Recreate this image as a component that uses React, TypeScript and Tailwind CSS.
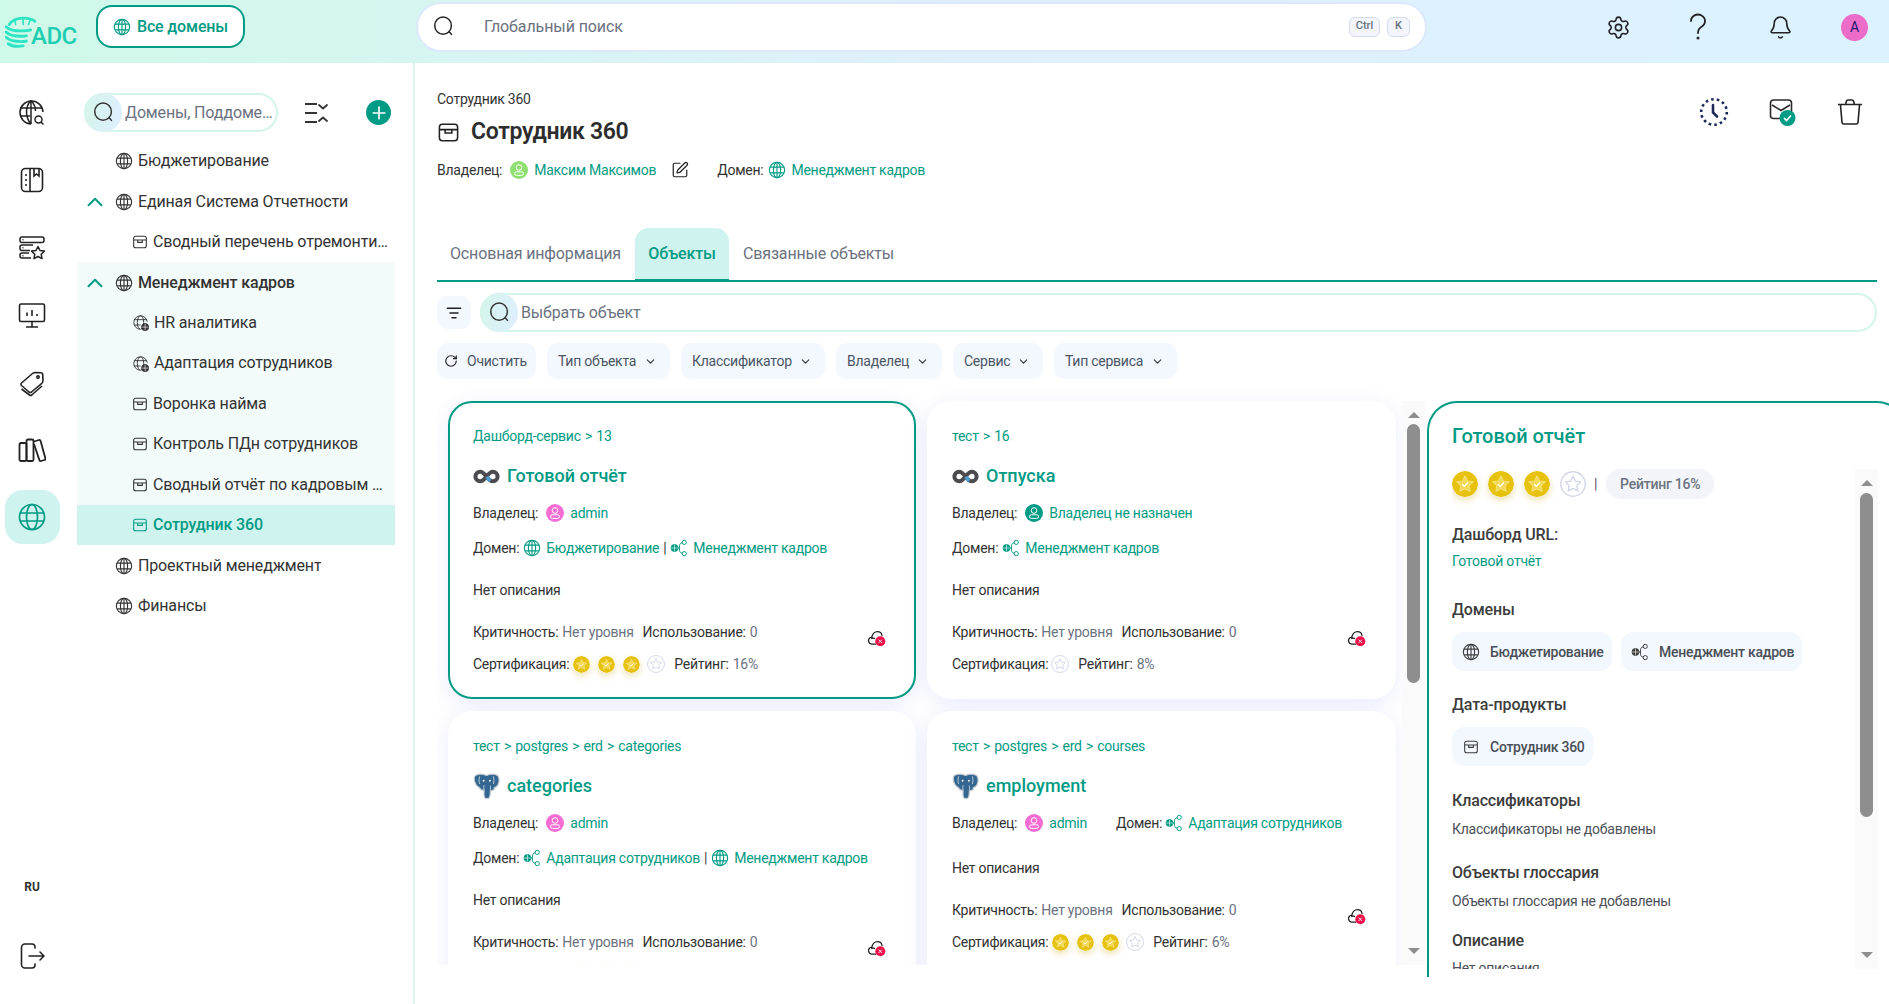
import React from "react";
import { Bell, ChevronDown, ChevronUp, ListFilter, Plus, RotateCw, Settings, SquarePen } from "lucide-react";

type IP = { className?: string };

const Globe = ({ className = "" }: IP) => (
  <svg viewBox="0 0 24 24" fill="none" stroke="currentColor" strokeWidth="1.5" className={className}>
    <circle cx="12" cy="12" r="10.2" />
    <ellipse cx="12" cy="12" rx="4.8" ry="10.2" />
    <path d="M12 1.8v20.4M2.8 8.2h18.4M2.8 15.8h18.4" />
  </svg>
);

const SubGlobe = ({ className = "" }: IP) => (
  <svg viewBox="0 0 24 24" fill="none" stroke="currentColor" strokeWidth="1.3" className={className}>
    <path d="M21.5 11A9.5 9.5 0 1 0 11 21.5" />
    <ellipse cx="12" cy="12" rx="4.5" ry="9.5" />
    <path d="M3 8h18M3 15.5h9" />
    <circle cx="18.5" cy="18.5" r="5" fill="currentColor" />
    <path d="M14 18.5h9M18.5 14v9" stroke="#fff" strokeWidth="0.9" />
  </svg>
);

const Box = ({ className = "" }: IP) => (
  <svg viewBox="0 0 24 24" fill="none" stroke="currentColor" strokeWidth="1.6" className={className}>
    <rect x="2.5" y="3.5" width="19" height="17" rx="3" />
    <path d="M2.5 9h19M8.5 9v3.6h7V9" />
  </svg>
);

const Nodes = ({ className = "" }: IP) => (
  <svg viewBox="0 0 24 24" fill="none" stroke="currentColor" strokeWidth="1.3" className={className}>
    <circle cx="6" cy="12" r="4.6" fill="currentColor" />
    <path d="M1.5 12h9M6 7.5v9" stroke="#fff" strokeWidth="0.8" />
    <circle cx="19" cy="4.5" r="2.8" />
    <circle cx="19" cy="19.5" r="2.8" />
    <path d="M16.3 5c-2.5.4-3.3 2-3.6 3.6-.3 2-.3 4.8 0 6.8.3 1.6 1.1 3.2 3.6 3.6M10.5 12h2.2" />
  </svg>
);

const SearchIcon = ({ className = "" }: IP) => (
  <svg viewBox="0 0 24 24" fill="none" stroke="currentColor" strokeWidth="1.7" className={className}>
    <ellipse cx="11.5" cy="11" rx="9.5" ry="9.8" />
    <path d="M18.5 18l2.6 3" strokeLinecap="round" />
  </svg>
);

const Infinity2 = () => (
  <svg viewBox="0 0 28 15" fill="none" strokeWidth="4.2" className="w-[27px] h-[15px] shrink-0">
    <path stroke="#4b4b4f" d="M14 7.500C11 3.500 9.500 2.500 7.500 2.500a5 5 0 0 0 0 10c2 0 3.500-1 6.500-5s4.500-5 6.500-5a5 5 0 0 1 0 10c-2 0-3.500-1-6.500-5" />
    <path stroke="#4f9bd0" d="M14.300 7.900c1.600 2.100 2.700 3.300 3.800 4" />
  </svg>
);

const Elephant = () => (
  <svg viewBox="0 0 28 28" className="w-[27px] h-[27px] shrink-0">
    <path
      d="M2.500 2.500C6 .8 10 .8 14 2.500 18 .8 22 .8 25.500 2.500 27.500 5 27.300 9 26 12c-1 2-2.500 3-4 3v2c-2 1-3 1.500-4 1.500 0 2.500 0 5-1 7-1 1.500-4 1.500-5 0-1-2-.5-5-.5-7.500-2.500 0-4-1-5-3C4.500 14 2.500 12 1.800 9 1 6.500 1.200 4 2.500 2.500z"
      fill="#336791"
      stroke="#c4cad0"
      strokeWidth="1.200"
    />
    <path d="M7 3.500c-1 2.500-1 5.500 0 8M21 3.500c1 2.500 1 5.500 0 8M11.500 17.500c-.5-2-.5-3.500 0-5M18 17.500c.3-1.500.3-3 0-4.500" fill="none" stroke="#dfe6ec" strokeWidth="0.800" />
    <circle cx="11" cy="8" r="1" fill="#fff" />
    <circle cx="17.500" cy="8" r="1" fill="#fff" />
  </svg>
);

const CloudX = () => (
  <svg viewBox="0 0 20 20" fill="none" className="w-[19px] h-[19px] shrink-0">
    <path d="M5.500 17a3.700 3.700 0 0 1-.4-7.400C5.600 6.500 8 3.800 11 3.800c2.700 0 4.400 1.800 4.800 4M8 11a3.500 3.500 0 0 0-3 0M9 17H5.500" stroke="#222" strokeWidth="1.400" strokeLinecap="round" />
    <circle cx="14" cy="14" r="5.300" fill="#f0114a" />
    <path d="M12.300 12.300l3.400 3.400M15.700 12.300l-3.400 3.400" stroke="#fff" strokeWidth="1" />
  </svg>
);

const Star = ({ on, className = "" }: IP & { on: boolean }) =>
  on ? (
    <svg viewBox="0 0 24 24" className={`${className} rounded-full shadow-[0_3px_7px_rgba(200,170,20,0.35)]`}>
      <circle cx="12" cy="12" r="12" fill="#e6c20c" />
      <path d="M12 4.500l2.300 4.700 5.200.8-3.700 3.600.9 5.100-4.700-2.400-4.700 2.400.9-5.100L4.500 10l5.200-.8z" fill="#f3d95a" stroke="#f5e078" strokeWidth="1" strokeLinejoin="round" />
      <path d="M9.300 12.300l2 1.900 3.500-3.600" fill="none" stroke="#fff" strokeWidth="1.200" />
    </svg>
  ) : (
    <svg viewBox="0 0 24 24" fill="none" stroke="#cfd3e6" strokeWidth="1.200" className={className}>
      <circle cx="12" cy="12" r="11.300" />
      <path d="M12 4.800l2.200 4.500 5 .7-3.600 3.500.8 4.900-4.400-2.300-4.400 2.300.8-4.900L4.800 10l5-.7z" strokeLinejoin="round" />
    </svg>
  );

const Avatar = ({ color }: { color: string }) => (
  <span className={`w-[18px] h-[18px] rounded-full flex items-center justify-center shrink-0 ${color}`}>
    <svg viewBox="0 0 18 18" fill="none" stroke="#fff" strokeWidth="1" className="w-[18px] h-[18px]">
      <circle cx="9" cy="6.500" r="2.800" />
      <rect x="4.500" y="10.800" width="9" height="3.600" rx="1.800" />
    </svg>
  </span>
);

const Scrollbar = ({ topGap, thumb, className = "" }: { topGap: string; thumb: string; className?: string }) => (
  <div className={`w-[23px] shrink-0 bg-[#fafafa] flex flex-col items-center ${className}`}>
    <span className="w-0 h-0 border-x-[6px] border-x-transparent border-b-[6px] border-b-[#8e8e8e] mt-[11px]" />
    <span className={`w-[13px] rounded-full bg-[#8e8e8e] ${topGap} ${thumb}`} />
    <span className="w-0 h-0 border-x-[6px] border-x-transparent border-t-[6px] border-t-[#8e8e8e] mt-auto mb-[11px]" />
  </div>
);

const teal = "text-[#009b84]";
const small = "text-sm tracking-[-0.25px]";
const big = "text-base tracking-[-0.15px]";

const GlobeLink = ({ name }: { name: string }) => (
  <span className={`flex items-center gap-[5px] ${teal}`}>
    <Globe className="w-[18px] h-[18px]" />
    {name}
  </span>
);
const NodesLink = ({ name }: { name: string }) => (
  <span className={`flex items-center gap-[5px] ${teal}`}>
    <Nodes className="w-[18px] h-[18px]" />
    {name}
  </span>
);

const Owner = ({ name, color }: { name: string; color: string }) => (
  <span className="flex items-center">
    <span>Владелец:</span>
    <span className="ml-2">
      <Avatar color={color} />
    </span>
    <span className={`ml-[6px] ${teal}`}>{name}</span>
  </span>
);

const Crumbs = ({ parts }: { parts: string[] }) => (
  <div className={`h-5 flex items-center ${small} ${teal} whitespace-pre [word-spacing:1px]`}>{parts.join(" > ")}</div>
);

type CardProps = {
  crumbs: string[];
  title: string;
  icon: React.ReactNode;
  owner: React.ReactNode;
  domain?: React.ReactNode;
  stars: boolean[];
  rating: string;
  selected?: boolean;
  height: string;
};

const Card = ({ crumbs, title, icon, owner, domain, stars, rating, selected, height }: CardProps) => (
  <div
    className={`rounded-[24px] bg-white border-2 pl-[23px] pr-[28px] pt-[23px] shadow-[0_5px_22px_rgba(70,85,235,0.11)] ${height} ${
      selected ? "border-[#009b84]" : "border-white"
    }`}
  >
    <Crumbs parts={crumbs} />
    <div className="h-8 mt-[14px] flex items-center gap-[7px]">
      {icon}
      <span className={`text-lg font-medium ${teal}`}>{title}</span>
    </div>
    <div className={`h-5 mt-[11px] flex items-center ${small} text-[#333]`}>{owner}</div>
    {domain && <div className={`h-5 mt-[15px] flex items-center gap-[4px] ${small} text-[#333] whitespace-nowrap`}>{domain}</div>}
    <div className={`h-5 flex items-center ${small} text-[#333] ${domain ? "mt-[22px]" : "mt-[25px]"}`}>Нет описания</div>
    <div className="mt-[22px] flex justify-between">
      <div className={`${small} text-[#333]`}>
        <div className="h-5 flex items-center">
          Критичность:<span className="ml-1 text-[#6b7280]">Нет уровня</span>
          <span className="ml-[9px]">Использование:</span>
          <span className="ml-1 text-[#6b7280]">0</span>
        </div>
        <div className="h-5 mt-3 flex items-center">
          Сертификация:
          <span className="flex items-center gap-[8px] ml-[4px]">
            {stars.map((s, i) => (
              <Star key={i} on={s} className={s ? "w-[17px] h-[17px]" : "w-[18px] h-[18px] -ml-[1px]"} />
            ))}
          </span>
          <span className="ml-[9px]">Рейтинг:</span>
          <span className="ml-1 text-[#6b7280]">{rating}</span>
        </div>
      </div>
      <div className="mt-[6px]">
        <CloudX />
      </div>
    </div>
  </div>
);

const Tree = ({
  label,
  icon,
  depth,
  open,
  bold,
  tone,
}: {
  label: string;
  icon: "globe" | "sub" | "box";
  depth: 0 | 1;
  open?: boolean;
  bold?: boolean;
  tone?: "soft" | "active";
}) => {
  const bg = tone === "active" ? "bg-[#cff3ee]" : tone === "soft" ? "bg-[#f2fbf9]" : "";
  const active = tone === "active";
  return (
    <div className={`h-[40.45px] flex items-center ${big} ${bg} ${depth ? "pl-[55px]" : "pl-[10px]"}`}>
      {!depth && (
        <span className="w-[18px] mr-[10px] shrink-0">{open && <ChevronUp className={`w-[26px] h-[26px] -ml-[5px] ${teal}`} strokeWidth={1.800} />}</span>
      )}
      <span className={`shrink-0 ${active ? teal : "text-[#333]"}`}>
        {icon === "globe" && <Globe className="w-[18px] h-[18px]" />}
        {icon === "sub" && <SubGlobe className="w-[17px] h-[17px]" />}
        {icon === "box" && <Box className="w-[16px] h-[16px]" />}
      </span>
      <span
        className={`ml-[5px] truncate ${depth ? "w-[236px]" : ""} ${active ? `font-medium ${teal}` : "text-[#333]"} ${bold ? "font-medium" : ""}`}
      >
        {label}
      </span>
    </div>
  );
};

const railIcon = "w-[28px] h-[28px] text-[#222]";

const Rail = () => (
  <div className="w-[77px] shrink-0 flex flex-col items-center pt-[16px] pb-[32px] pr-[13px]">
    {[
      <svg key="1" viewBox="0 0 28 28" fill="none" stroke="currentColor" strokeWidth="1.500" className={railIcon}>
        <path d="M25 13A11.500 11.500 0 1 0 13 25" />
        <path d="M13 1.500c-3 3-4.500 7-4.500 11.500s1.500 8.500 4.500 12M13 1.500c3 3 4.500 7 4.500 10.500M2 9h22M2 17h10M13 1.500V25" />
        <circle cx="20.500" cy="20.500" r="3.500" />
        <path d="M23 23l2.500 2.500" />
      </svg>,
      <svg key="2" viewBox="0 0 28 28" fill="none" stroke="currentColor" strokeWidth="1.600" className={railIcon}>
        <rect x="3.500" y="2.500" width="21" height="23" rx="4" />
        <path d="M12 2.500v23M7 9h2M7 14h2M7 19h2" />
        <path d="M16 2.500v7.500l2.500-2 2.500 2V2.500" />
      </svg>,
      <svg key="3" viewBox="0 0 28 28" fill="none" stroke="currentColor" strokeWidth="1.500" className={railIcon}>
        <rect x="2" y="3" width="24" height="5.500" rx="2" />
        <path d="M15 11H4a2 2 0 0 0-2 2v1.500a2 2 0 0 0 2 2h8M11 19H4a2 2 0 0 0-2 2v1a2 2 0 0 0 2 2h9" />
        <path d="M4.500 5.700h1M4.500 13.700h1M4.500 21.700h1" />
        <path d="M20 12.500l2 4 4.400.6-3.200 3.100.8 4.400-4-2.100-4 2.100.8-4.400-3.200-3.100 4.400-.6z" strokeLinejoin="round" />
      </svg>,
      <svg key="4" viewBox="0 0 28 28" fill="none" stroke="currentColor" strokeWidth="1.600" className={railIcon}>
        <rect x="1.500" y="3" width="25" height="17.500" rx="1.500" />
        <path d="M14 20.500V26M8 26h12M9 15v-3.500M14 15V9M19 15v-2" />
      </svg>,
      <svg key="5" viewBox="0 0 28 28" fill="none" stroke="currentColor" strokeWidth="1.600" strokeLinejoin="round" className={railIcon}>
        <path d="M3.500 14L14.500 4.500c1-.8 2-1 3-1l5.500.3c1 0 1.700.7 1.700 1.700l.3 6c0 1-.4 2-1.200 2.800L13.500 23c-.8.600-1.700.6-2.500 0l-7.500-6.500c-.800-.7-.8-1.800 0-2.500z" />
        <circle cx="20" cy="8" r="1.200" />
        <path d="M3.500 20l8 6c.7.500 1.500.500 2.200 0L24 17" />
      </svg>,
      <svg key="6" viewBox="0 0 28 28" fill="none" stroke="currentColor" strokeWidth="1.800" strokeLinejoin="round" className={railIcon}>
        <rect x="1.500" y="7" width="7" height="18" rx="1.500" />
        <rect x="8.500" y="3.500" width="7" height="21.500" rx="1.500" />
        <path d="M16 5.500l5-1.500c.8-.2 1.400.2 1.600.9l4.800 17.500c.2.800-.2 1.400-.9 1.600l-3.500 1c-.8.200-1.400-.2-1.600-.9L16 8" />
      </svg>,
    ].map((ic) => (
      <div key={ic.key} className="h-[67.500px] flex items-center justify-center shrink-0">
        {ic}
      </div>
    ))}
    <div className="h-[54px] w-[55px] mt-[6px] rounded-[18px] bg-[#cff3ee] flex items-center justify-center shrink-0">
      <svg viewBox="0 0 28 28" fill="none" stroke="#009b84" strokeWidth="1.700" className="w-[28px] h-[28px]">
        <circle cx="14" cy="14" r="12.500" />
        <ellipse cx="14" cy="14" rx="5.500" ry="12.500" />
        <path d="M2.500 10h23M2.500 18h23" />
      </svg>
    </div>
    <div className="mt-auto h-5 flex items-center text-xs font-bold text-[#333]">RU</div>
    <div className="mt-[43px] h-[32px] flex items-center">
      <svg viewBox="0 0 28 28" fill="none" stroke="#222" strokeWidth="1.600" strokeLinecap="round" strokeLinejoin="round" className="w-[28px] h-[28px]">
        <path d="M17 6V5a3 3 0 0 0-3-3H7a3.500 3.500 0 0 0-3.500 3.500v17A3.500 3.500 0 0 0 7 26h7a3 3 0 0 0 3-3v-1M11 14h15M22 10l4 4-4 4" />
      </svg>
    </div>
  </div>
);

const Sidebar = () => (
  <div className="w-[338px] shrink-0 pr-[18px] border-r-2 border-[#dcf5ef]">
    <div className="h-full">
      <div className="h-[39px] mt-[30px] mb-[9px] flex items-center pl-[7px]">
        <div className="w-[194px] h-[39px] rounded-full border-2 border-[#d3f5ec] flex items-center relative">
          <span className="w-[38px] h-[39px] -ml-[2px] rounded-full bg-[linear-gradient(100deg,#d4f6ea,#deeeff)] flex items-center justify-center shrink-0">
            <SearchIcon className="w-[21px] h-[21px] text-[#333]" />
          </span>
          <span className={`ml-[3px] ${big} text-[#6b7280] truncate w-[150px]`}>Домены, Поддомены</span>
        </div>
        <svg viewBox="0 0 24 22" fill="none" stroke="#333" strokeWidth="1.800" className="w-[24px] h-[22px] ml-[26px]">
          <path d="M1 2h12M1 11h12M1 20h12" strokeWidth="2" />
          <path d="M15 3l4 3.500L23 3M15 19l4-3.500 4 3.500" strokeLinecap="round" strokeLinejoin="round" />
        </svg>
        <span className="w-[25px] h-[25px] ml-[38px] rounded-full bg-[#009b84] flex items-center justify-center">
          <Plus className="w-[20px] h-[20px] text-white" strokeWidth={2} />
        </span>
      </div>
      <Tree label="Бюджетирование" icon="globe" depth={0} />
      <Tree label="Единая Система Отчетности" icon="globe" depth={0} open />
      <Tree label="Сводный перечень отремонтированного оборудования" icon="box" depth={1} />
      <Tree label="Менеджмент кадров" icon="globe" depth={0} open bold tone="soft" />
      <Tree label="HR аналитика" icon="sub" depth={1} tone="soft" />
      <Tree label="Адаптация сотрудников" icon="sub" depth={1} tone="soft" />
      <Tree label="Воронка найма" icon="box" depth={1} tone="soft" />
      <Tree label="Контроль ПДн сотрудников" icon="box" depth={1} tone="soft" />
      <Tree label="Сводный отчёт по кадровым показателям" icon="box" depth={1} tone="soft" />
      <Tree label="Сотрудник 360" icon="box" depth={1} tone="active" />
      <Tree label="Проектный менеджмент" icon="globe" depth={0} />
      <Tree label="Финансы" icon="globe" depth={0} />
    </div>
  </div>
);

const FilterChip = ({ label, w }: { label: string; w: string }) => (
  <div className={`h-[36px] rounded-[10px] bg-[#f3f8ff] flex items-center justify-between pl-[11px] pr-[13px] ${small} text-[#4b5563] ${w}`}>
    {label}
    <ChevronDown className="w-[13px] h-[13px] text-[#333]" strokeWidth={2} />
  </div>
);

const H = ({ children, className = "" }: { children: React.ReactNode; className?: string }) => (
  <div className={`h-6 pt-[1px] flex items-center ${big} font-medium text-[#3d3d3d] ${className}`}>{children}</div>
);
const Chip = ({ icon, label, w }: { icon: React.ReactNode; label: string; w: string }) => (
  <div className={`h-[39px] rounded-[12px] bg-[#f3f8ff] flex items-center pl-[9px] ${small} font-medium text-[#4a4f57] ${w}`}>
    <span className="w-[19px] flex justify-center text-[#3d3d3d]">{icon}</span>
    <span className="ml-[10px]">{label}</span>
  </div>
);

const Detail = () => (
  <div className="w-[480px] shrink-0 h-[576px] mt-4 ml-[2px] rounded-t-[30px] border-2 border-b-0 border-[#009b84] bg-white">
    <div className="pl-[23px] pt-[19px] h-[47px] flex items-center">
      <span className={`text-xl font-medium ${teal}`}>Готовой отчёт</span>
    </div>
    <div className="mt-[19px] h-[500px] pl-[23px] flex">
      <div className="w-[403px] shrink-0 overflow-hidden">
        <div className="h-[30px] flex items-center">
          <span className="flex items-center gap-[10px]">
            {[true, true, true, false].map((s, i) => (
              <Star key={i} on={s} className="w-[26px] h-[26px]" />
            ))}
          </span>
          <span className={`ml-[8px] ${small} text-[#4b5563]`}>|</span>
          <span className={`ml-[9px] h-[30px] w-[108px] rounded-full bg-[#f2f4fa] flex items-center justify-center ${small} font-medium text-[#6b7280]`}>
            Рейтинг 16%
          </span>
        </div>
        <H className="mt-[23px]">Дашборд URL:</H>
        <div className={`mt-[5px] h-5 flex items-center ${small} ${teal}`}>Готовой отчёт</div>
        <H className="mt-[26px]">Домены</H>
        <div className="mt-[11px] flex gap-[9px]">
          <Chip icon={<Globe className="w-[18px] h-[18px]" />} label="Бюджетирование" w="w-[160px]" />
          <Chip icon={<Nodes className="w-[18px] h-[18px]" />} label="Менеджмент кадров" w="w-[181px]" />
        </div>
        <H className="mt-[21px]">Дата-продукты</H>
        <div className="mt-[11px] flex">
          <Chip icon={<Box className="w-[16px] h-[16px]" />} label="Сотрудник 360" w="w-[141px]" />
        </div>
        <H className="mt-[22px]">Классификаторы</H>
        <div className={`mt-[7px] h-5 flex items-center ${small} text-[#4b4f57]`}>Классификаторы не добавлены</div>
        <H className="mt-[21px]">Объекты глоссария</H>
        <div className={`mt-[7px] h-5 flex items-center ${small} text-[#4b4f57]`}>Объекты глоссария не добавлены</div>
        <H className="mt-[17px]">Описание</H>
        <div className={`mt-[6px] h-5 flex items-center ${small} text-[#4b4f57]`}>Нет описания</div>
      </div>
      <Scrollbar topGap="mt-[7px]" thumb="h-[324px]" />
    </div>
  </div>
);

const Main = () => (
  <div className="flex-1 min-w-0 overflow-hidden pl-[22px] text-[#333]">
    <div className="flex pr-[12px]">
      <div className="flex-1">
        <div className={`h-5 mt-[26px] flex items-center ${small}`}>Сотрудник 360</div>
        <div className="h-8 mt-[7px] flex items-center">
          <Box className="w-[23px] h-[23px] text-[#222]" />
          <span className="ml-[11px] text-[23px] tracking-[-0.3px] font-semibold text-[#2d2d2d]">Сотрудник 360</span>
        </div>
        <div className={`h-5 mt-[12px] flex items-center ${small}`}>
          <span>Владелец:</span>
          <span className="ml-2">
            <Avatar color="bg-[#8fe070]" />
          </span>
          <span className={`ml-[6px] ${teal}`}>Максим Максимов</span>
          <SquarePen className="w-[18px] h-[18px] ml-[15px] text-[#222]" strokeWidth={1.600} />
          <span className="ml-[28px]">Домен:</span>
          <span className="ml-[5px] flex">
            <GlobeLink name="Менеджмент кадров" />
          </span>
        </div>
      </div>
      <div className="flex gap-[38px] mt-[33px] pr-[12px] h-[32px] items-center">
        <svg viewBox="0 0 30 30" fill="none" stroke="#1f2a5c" strokeWidth="2.600" className="w-[30px] h-[30px]">
          <circle cx="15" cy="15" r="12.800" strokeDasharray="2.600 3.100" />
          <path d="M14 8v7.500l4 4" strokeLinecap="round" />
        </svg>
        <svg viewBox="0 0 30 30" fill="none" stroke="#2b2b2b" strokeWidth="1.600" className="w-[30px] h-[30px]">
          <rect x="3.500" y="3" width="21" height="18.500" rx="3" />
          <path d="M5 8l9 5.500L23 8" />
          <circle cx="20.500" cy="21" r="8" fill="#009b84" stroke="none" />
          <path d="M17 21l2.500 2.500 4.500-5" stroke="#fff" strokeWidth="1.700" />
        </svg>
        <svg viewBox="0 0 30 30" fill="none" stroke="#222" strokeWidth="1.600" strokeLinejoin="round" className="w-[30px] h-[30px]">
          <path d="M3 7.500h24M10.500 7.500l1-3.500a1.500 1.500 0 0 1 1.500-1h4a1.500 1.500 0 0 1 1.500 1l1 3.500M5.500 8l1.500 17.500a2 2 0 0 0 2 1.500h12a2 2 0 0 0 2-1.500L24.500 8" />
        </svg>
      </div>
    </div>

    <div className={`mt-[48px] h-[54px] mr-[12px] border-b-2 border-[#009b84] flex items-end ${big}`}>
      <div className="h-[52px] w-[198px] flex items-center pl-[13px] text-[#6b7280]">Основная информация</div>
      <div className={`h-[54px] w-[94px] -mb-[2px] rounded-t-[14px] bg-[#cff3ee] border-b-[3px] border-[#009b84] flex items-center justify-center font-medium ${teal}`}>
        Объекты
      </div>
      <div className="h-[52px] pl-[14px] flex items-center text-[#6b7280]">Связанные объекты</div>
    </div>

    <div className="mt-[11px] mr-[12px] h-[39px] flex items-center">
      <div className="w-[34px] h-[33px] rounded-[10px] bg-[#f3f8ff] flex items-center justify-center">
        <ListFilter className="w-[16px] h-[16px] text-[#222]" strokeWidth={2.200} />
      </div>
      <div className="flex-1 ml-[9px] h-[39px] rounded-full border-2 border-[#d3f5ec] flex items-center">
        <span className="w-[38px] h-[39px] -ml-[2px] rounded-full bg-[linear-gradient(100deg,#d4f6ea,#deeeff)] flex items-center justify-center shrink-0">
          <SearchIcon className="w-[21px] h-[21px] text-[#333]" />
        </span>
        <span className={`ml-[3px] ${big} text-[#6b7280]`}>Выбрать объект</span>
      </div>
    </div>

    <div className="mt-[11px] flex gap-[11px]">
      <div className={`h-[36px] w-[99px] rounded-[10px] bg-[#f3f8ff] flex items-center pl-[7px] ${small} text-[#4b5563]`}>
        <RotateCw className="w-[14px] h-[14px] text-[#222]" strokeWidth={2} />
        <span className="ml-[9px]">Очистить</span>
      </div>
      <FilterChip label="Тип объекта" w="w-[123px]" />
      <FilterChip label="Классификатор" w="w-[144px]" />
      <FilterChip label="Владелец" w="w-[106px]" />
      <FilterChip label="Сервис" w="w-[90px]" />
      <FilterChip label="Тип сервиса" w="w-[123px]" />
    </div>

    <div className="mt-[6px] flex h-[592px]">
      <div className="w-[965px] shrink-0 h-[580px] overflow-hidden pt-4 pl-[11px] pr-[6px]">
        <div className="grid grid-cols-[468px_469px] gap-x-[11px] gap-y-[12px]">
          <Card
            selected
            height="h-[298px]"
            crumbs={["Дашборд-сервис", "13"]}
            title="Готовой отчёт"
            icon={<Infinity2 />}
            owner={<Owner name="admin" color="bg-[#f56dd2]" />}
            domain={
              <>
                <span>Домен:</span>
                <GlobeLink name="Бюджетирование" />
                <span>|</span>
                <NodesLink name="Менеджмент кадров" />
              </>
            }
            stars={[true, true, true, false]}
            rating="16%"
          />
          <Card
            height="h-[298px]"
            crumbs={["тест", "16"]}
            title="Отпуска"
            icon={<Infinity2 />}
            owner={<Owner name="Владелец не назначен" color="bg-[#009b84]" />}
            domain={
              <>
                <span>Домен:</span>
                <NodesLink name="Менеджмент кадров" />
              </>
            }
            stars={[false]}
            rating="8%"
          />
          <Card
            height="h-[298px]"
            crumbs={["тест", "postgres", "erd", "categories"]}
            title="categories"
            icon={<Elephant />}
            owner={<Owner name="admin" color="bg-[#f56dd2]" />}
            domain={
              <>
                <span>Домен:</span>
                <NodesLink name="Адаптация сотрудников" />
                <span>|</span>
                <GlobeLink name="Менеджмент кадров" />
              </>
            }
            stars={[true, true, true, false]}
            rating="6%"
          />
          <Card
            height="h-[298px]"
            crumbs={["тест", "postgres", "erd", "courses"]}
            title="employment"
            icon={<Elephant />}
            owner={
              <>
                <Owner name="admin" color="bg-[#f56dd2]" />
                <span className="ml-[29px]">Домен:</span>
                <span className="ml-[3px] flex">
                  <NodesLink name="Адаптация сотрудников" />
                </span>
              </>
            }
            stars={[true, true, true, false]}
            rating="6%"
          />
        </div>
      </div>
      <Scrollbar topGap="mt-[6px]" thumb="h-[259px]" className="h-[564px] mt-4 pt-0" />
      <Detail />
    </div>
  </div>
);

const Header = () => (
  <div className="h-[63px] shrink-0 flex items-center bg-[linear-gradient(90deg,#cff9e8_0%,#dff0fc_50%,#dcf2ff_100%)]">
    <div className="w-[96px] shrink-0 flex items-center pl-[5px]">
      <svg viewBox="0 0 30 30" fill="none" stroke="#2ce4c4" strokeWidth="2.700" strokeLinecap="round" className="w-[32px] h-[32px]">
        <path d="M4 8c2-4 8-6 13-6s9 1 11 3" />
        <path d="M1 10c3 3 9 4 14 4 3 0 6 0 9-1M1 15c3 3 9 4 14 4 2 0 4 0 5-.5M1 20c3 3 9 4 14 4 2 0 3 0 5-.5M3 26c3 2 8 3 14 2" />
        <path d="M9 3l1 5M17 2v6M24 3l-2 5" strokeWidth="1.500" />
      </svg>
      <span className="-ml-[6px] mt-[8px] text-[24px] leading-none font-medium text-[#20cdb0] tracking-[-0.5px]">ADC</span>
    </div>
    <div className={`w-[149px] h-[43px] shrink-0 -mt-[10px] rounded-[16px] border-2 border-[#009b84] bg-white flex items-center justify-center gap-[6px] ${big} font-medium ${teal}`}>
      <Globe className="w-[18px] h-[18px]" />
      Все домены
    </div>
    <div className="ml-[171px] w-[1011px] h-[50px] -mt-[10px] shrink-0 rounded-[25px] bg-white border-2 border-[#dce9fb] flex items-center pl-[15px] pr-[15px]">
      <SearchIcon className="w-[21px] h-[21px] text-[#222]" />
      <span className="ml-[30px] text-base tracking-[-0.1px] text-[#6b7280]">Глобальный поиск</span>
      <span className="ml-auto h-5 w-[31px] rounded-[6px] border border-[#d5dbee] bg-[#f3f5fb] flex items-center justify-center text-[11px] font-medium text-[#6b7280]">Ctrl</span>
      <span className="ml-[7px] h-5 w-[23px] rounded-[6px] border border-[#d5dbee] bg-[#f3f5fb] flex items-center justify-center text-[11px] font-medium text-[#6b7280]">K</span>
    </div>
    <div className="flex-1 flex items-center -mt-[9px] pl-[179px]">
      <Settings className="w-[25px] h-[25px] text-[#222]" strokeWidth={1.500} />
      <svg viewBox="0 0 20 28" fill="none" stroke="#222" strokeWidth="1.800" strokeLinecap="round" className="w-[20px] h-[28px] ml-[57px]">
        <path d="M3 8a7 6.500 0 1 1 10.500 5.700C11 15.300 10 16.500 10 20" />
        <circle cx="10" cy="25" r="0.600" />
      </svg>
      <Bell className="w-[25px] h-[25px] ml-[60px] text-[#222]" strokeWidth={1.500} />
      <span className="ml-[48px] w-[27px] h-[27px] rounded-full bg-[#ec6cca] flex items-center justify-center text-sm text-[#1a1a6e]">A</span>
    </div>
  </div>
);

export default function App() {
  return (
    <div className="w-[1889px] h-[1004px] overflow-hidden flex flex-col bg-white font-['Roboto',sans-serif]">
      <Header />
      <div className="flex-1 min-h-0 flex">
        <Rail />
        <Sidebar />
        <Main />
      </div>
    </div>
  );
}
